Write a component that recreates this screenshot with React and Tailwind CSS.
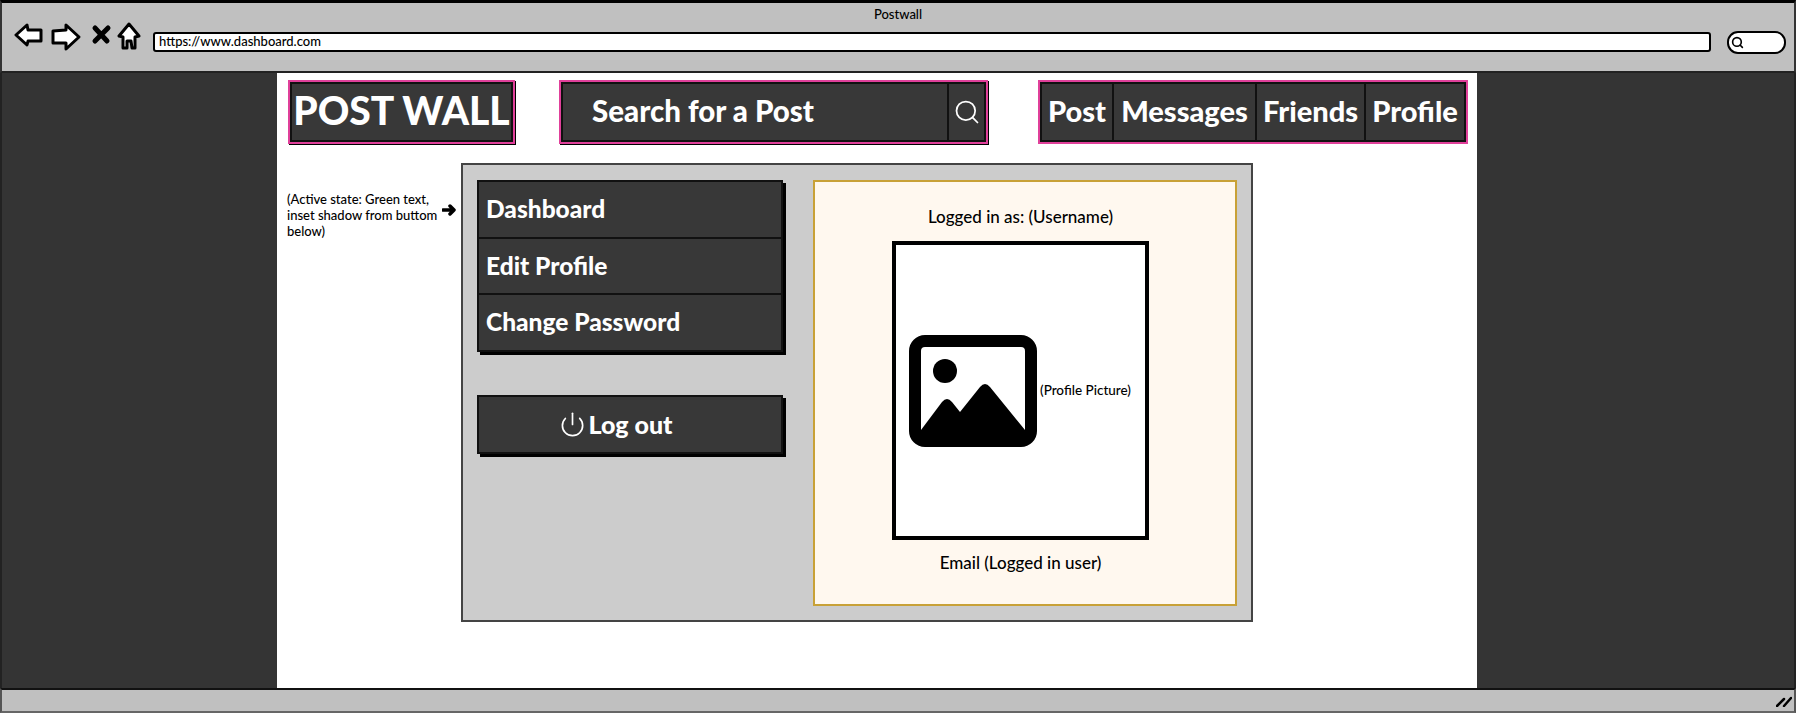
import React from "react";
import { Search, Power } from "lucide-react";

const ChromeIcons = () => (
  <div className="mb-[10px] flex items-center">
    <svg width="130" height="30" viewBox="0 0 130 30" className="shrink-0">
      {/* back */}
      <path d="M2 13 L13 3 L14 8 L27 8 L27 19 L14 19 L13 23 Z" fill="#fff" stroke="#000" strokeWidth="3" strokeLinejoin="round" />
      {/* forward */}
      <path d="M65 15 L52 3 L52 8 L39 9 L39 21 L52 21 L52 27 Z" fill="#fff" stroke="#000" strokeWidth="3" strokeLinejoin="round" />
      {/* stop */}
      <path d="M81 6 L93 19 M94 6 L81 19" fill="none" stroke="#000" strokeWidth="5" strokeLinecap="round" />
      {/* home */}
      <path d="M115 2 L105 14 L109 15 L109 26 L113 26 L113 19 L117 19 L118 26 L121 26 L121 15 L125 14 Z" fill="#fff" stroke="#000" strokeWidth="3" strokeLinejoin="round" />
    </svg>
  </div>
);

const NavCell = ({ children, className }) => (
  <div className={`flex h-full items-center justify-center border-2 border-[#111] bg-[#383838] pb-[2px] text-[29px] font-black text-white ${className}`}>
    {children}
  </div>
);

const SideButton = ({ children, className = "" }) => (
  <div className={`flex items-center border-x-2 border-t-2 border-[#111] bg-[#383838] pl-[7px] text-[24.5px] font-black text-white ${className}`}>
    {children}
  </div>
);

const PictureIcon = () => (
  <svg width="128" height="112" viewBox="0 0 128 112" className="shrink-0">
    <rect x="6" y="6" width="116" height="100" rx="10" fill="#fff" stroke="#000" strokeWidth="12" />
    <circle cx="36" cy="36" r="12" fill="#000" />
    <path d="M12 95 L33 67 Q38 61 43 67 L51 77 L71 52 Q76 46 81 52 L116 95 L116 104 L12 104 Z" fill="#000" />
  </svg>
);

export default function App() {
  return (
    <div className="flex h-[713px] w-[1796px] flex-col overflow-hidden bg-white font-['Lato',sans-serif] font-medium text-black">
      {/* browser bar */}
      <div className="h-[73px] shrink-0 border-x-2 border-t-[3px] border-b-2 border-x-[#333] border-t-black border-b-[#222] bg-[#c0c0c0]">
        <p className="pt-[3px] text-center text-[13px] leading-[16px]">Postwall</p>
        <div className="flex items-center pl-[12px]">
          <ChromeIcons />
          <div className="ml-[9px] flex h-[20px] w-[1558px] items-center rounded-[3px] border-2 border-black bg-white pl-[4px] text-[13px]">
            https://www.dashboard.com
          </div>
          <div className="ml-[16px] flex h-[23px] w-[59px] items-center rounded-[11px] border-2 border-black bg-white pl-[2px]">
            <Search size={13} strokeWidth={3} color="#000" />
          </div>
        </div>
      </div>

      <div className="flex min-h-0 flex-1">
        <div className="w-[277px] shrink-0 border-l-2 border-[#222] bg-[#343434]" />

        <div className="w-[1200px] shrink-0 bg-white">
          {/* site header */}
          <div className="mt-[7px] ml-[11px] flex h-[64px]">
            <div className="flex w-[227px] items-center justify-center border-2 border-[#e0409a] shadow-[1px_1px_0_#000]">
              <div className="flex h-full w-full items-center justify-center border-2 border-[#111] bg-[#383838] pb-[4px] text-[39px] font-black whitespace-nowrap text-white">
                POST WALL
              </div>
            </div>
            <div className="ml-[44px] flex w-[429px] border-2 border-[#e0409a] shadow-[1px_1px_0_#000]">
              <div className="flex flex-1 items-center border-2 border-[#111] bg-[#383838] pb-[2px] pl-[29px] text-[29.5px] font-black text-white">
                Search for a Post
              </div>
              <div className="flex w-[37px] items-center justify-center border-y-2 border-r-2 border-[#111] bg-[#383838]">
                <Search size={28} strokeWidth={1.5} color="#fff" />
              </div>
            </div>
            <div className="ml-[50px] flex w-[430px] border-2 border-[#e0409a]">
              <NavCell className="w-[74px]">Post</NavCell>
              <NavCell className="w-[143px] border-l-0">Messages</NavCell>
              <NavCell className="w-[109px] border-l-0">Friends</NavCell>
              <NavCell className="flex-1 border-l-0">Profile</NavCell>
            </div>
          </div>

          <div className="mt-[19px] flex">
            {/* annotation */}
            <div className="ml-[10px] flex w-[174px] items-start">
              <p className="mt-[28px] w-[155px] text-[13px] leading-[16px]">
                (Active state: Green text, inset shadow from buttom below)
              </p>
              <svg width="15" height="14" viewBox="0 0 15 14" className="mt-[40px] shrink-0">
                <path d="M1 7 L9 7 M8 3 L12 7 L8 11" fill="none" stroke="#000" strokeWidth="3.5" strokeLinecap="round" strokeLinejoin="round" />
              </svg>
            </div>

            {/* dashboard panel */}
            <div className="flex h-[459px] w-[792px] border-2 border-[#444] bg-[#cccccc] pt-[15px] pl-[14px]">
              <div className="w-[306px] shrink-0">
                <div className="shadow-[3px_3px_0_#000]">
                  <SideButton className="h-[57px]">Dashboard</SideButton>
                  <SideButton className="h-[56px]">Edit Profile</SideButton>
                  <SideButton className="h-[59px] border-b-2">Change Password</SideButton>
                </div>
                <div className="mt-[43px] flex h-[59px] items-center justify-center border-2 border-[#111] bg-[#383838] pr-[28px] text-[25px] font-black text-white shadow-[3px_3px_0_#000]">
                  <Power size={27} strokeWidth={1.5} color="#fff" />
                  <span className="ml-[2px]">Log out</span>
                </div>
              </div>

              {/* user card */}
              <div className="ml-[30px] flex h-[426px] w-[424px] flex-col items-center border-2 border-[#c8a137] bg-[#fff8ef] pr-[9px]">
                <p className="mt-[23px] text-[17px] leading-[24px]">Logged in as: (Username)</p>
                <div className="mt-[12px] flex h-[299px] w-[257px] items-center border-4 border-black bg-white pl-[13px]">
                  <PictureIcon />
                  <span className="ml-[3px] text-[13.5px] whitespace-nowrap">(Profile Picture)</span>
                </div>
                <p className="mt-[11px] text-[17px] leading-[24px]">Email (Logged in user)</p>
              </div>
            </div>
          </div>
        </div>

        <div className="flex-1 border-r-2 border-[#222] bg-[#343434]" />
      </div>

      {/* status bar */}
      <div className="flex h-[25px] shrink-0 items-center justify-end border-x-2 border-t-2 border-b-2 border-x-[#555] border-t-[#111] border-b-[#666] bg-[#c0c0c0] pr-[2px]">
        <svg width="16" height="13" viewBox="0 0 16 13">
          <path d="M1 12 L8 5 M8 12 L15 4" fill="none" stroke="#000" strokeWidth="2.5" strokeLinecap="round" />
        </svg>
      </div>
    </div>
  );
}
